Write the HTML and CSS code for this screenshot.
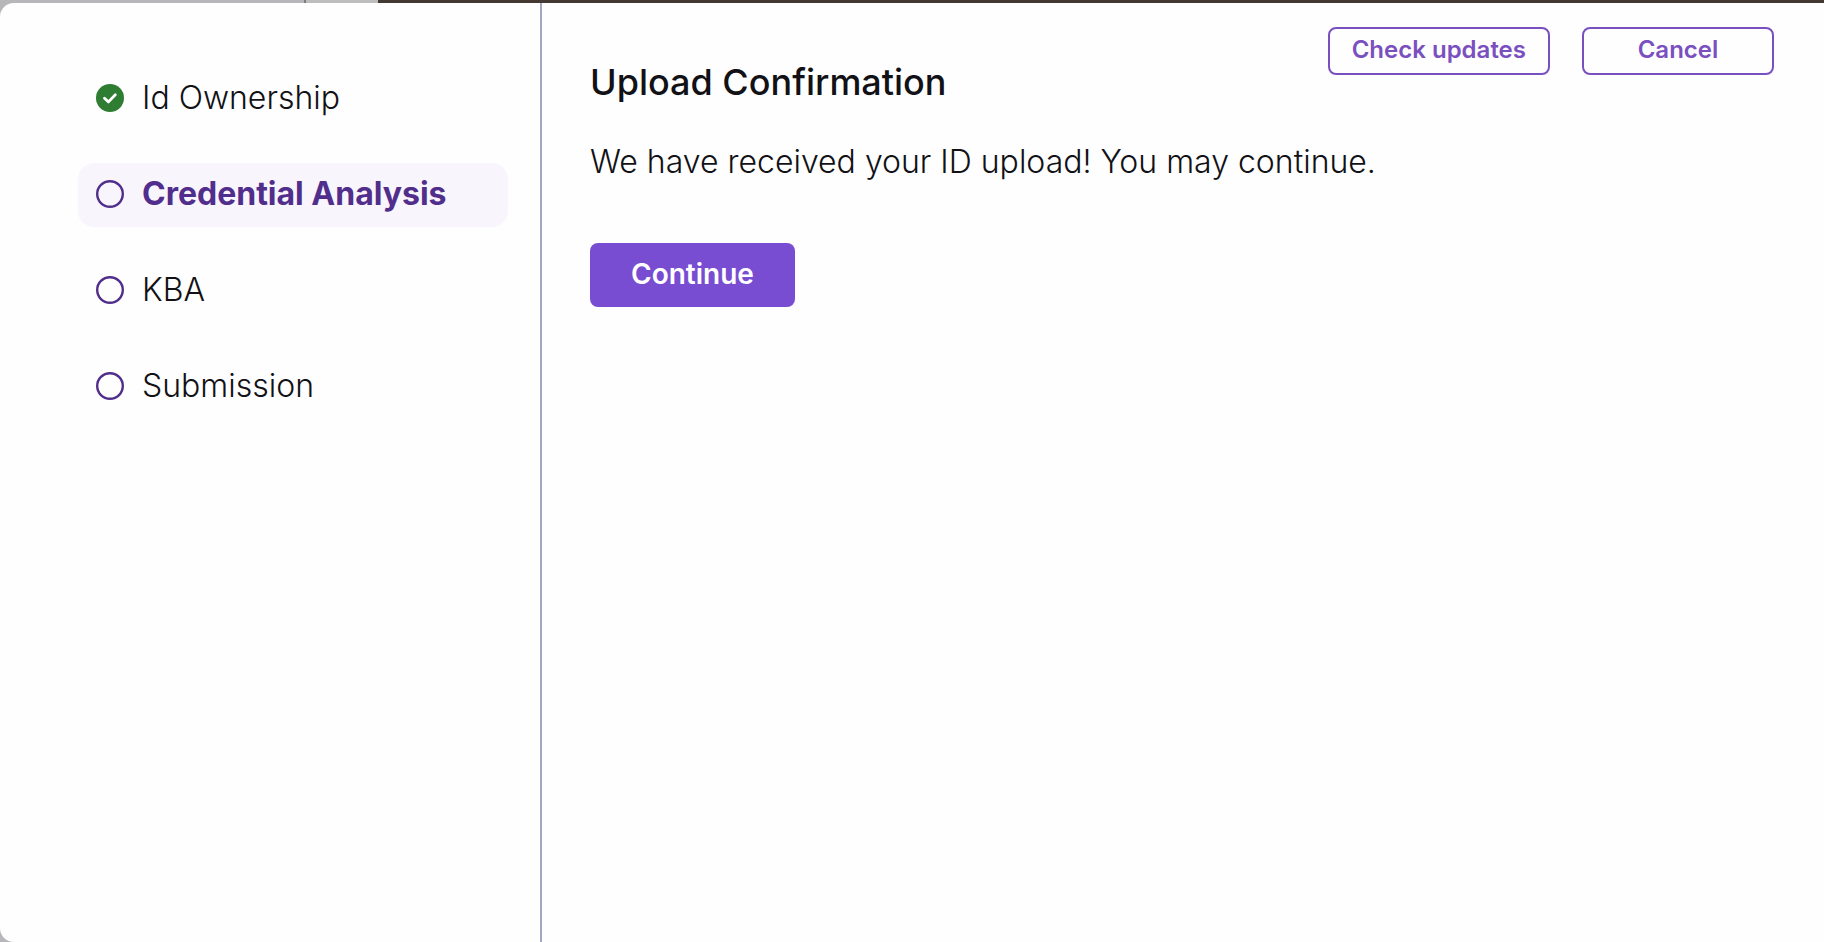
FILE: index.html
```html
<!DOCTYPE html>
<html lang="en">
<head>
<meta charset="utf-8">
<meta name="viewport" content="width=device-width, initial-scale=1">
<title>Upload Confirmation</title>
<link rel="stylesheet" href="styles.css">
</head>
<body>
<div class="backdrop" aria-hidden="true"><span class="backdrop-left"></span><span class="backdrop-mid"></span><span class="backdrop-dark"></span></div>
<div class="dialog">
  <nav class="sidebar" aria-label="Progress">
    <ol class="steps">
      <li class="step">
        <svg class="step-icon" viewBox="0 0 28 28" aria-hidden="true"><circle cx="14" cy="14" r="14" fill="#2e7d32"/><path d="M8.5 14.3l4 3.6 6.8-7.2" fill="none" stroke="#fff" stroke-width="2.8" stroke-linecap="round" stroke-linejoin="round"/></svg>
        <span>Id Ownership</span>
      </li>
      <li class="step step-active" aria-current="step">
        <svg class="step-icon" viewBox="0 0 28 28" aria-hidden="true"><circle cx="14" cy="14" r="12.8" fill="none" stroke="#512e8b" stroke-width="2.4"/></svg>
        <span>Credential Analysis</span>
      </li>
      <li class="step">
        <svg class="step-icon" viewBox="0 0 28 28" aria-hidden="true"><circle cx="14" cy="14" r="12.8" fill="none" stroke="#512e8b" stroke-width="2.4"/></svg>
        <span>KBA</span>
      </li>
      <li class="step">
        <svg class="step-icon" viewBox="0 0 28 28" aria-hidden="true"><circle cx="14" cy="14" r="12.8" fill="none" stroke="#512e8b" stroke-width="2.4"/></svg>
        <span>Submission</span>
      </li>
    </ol>
  </nav>
  <main class="content">
    <header class="header">
      <h1 class="title">Upload Confirmation</h1>
      <div class="actions">
        <button class="button button-outline" type="button">Check updates</button>
        <button class="button button-outline" type="button">Cancel</button>
      </div>
    </header>
    <p class="message">We have received your ID upload! You may continue.</p>
    <button class="button button-primary" type="button">Continue</button>
  </main>
</div>
</body>
</html>
```
FILE: styles.css
```css
* {
  box-sizing: border-box;
}

body {
  display: flex;
  flex-direction: column;
  min-height: 100vh;
  margin: 0;
  background: #b7b7b9;
  color: #111116;
  font-family: Inter, "Liberation Sans", sans-serif;
}

.backdrop {
  display: flex;
  height: 3px;
}

.backdrop-left {
  width: 306px;
  border-right: 2px solid #7d7c82;
}

.backdrop-mid {
  width: 72px;
  background: #bdbdbe;
}

.backdrop-dark {
  flex: 1;
  background: #443832;
}

.dialog {
  display: flex;
  flex: 1;
  background: #fefefe;
  border-radius: 14px 0 0 14px;
}

.sidebar {
  flex: none;
  padding: 64px 32px 64px 78px;
  border-right: 2px solid #a3a6bf;
}

.steps {
  display: flex;
  flex-direction: column;
  gap: 32px;
  width: 430px;
  margin: 0;
  padding: 0;
  list-style: none;
}

.step {
  display: flex;
  align-items: center;
  gap: 18px;
  height: 64px;
  padding: 0 18px 2px;
  border-radius: 16px;
  font-size: 32px;
  font-weight: 300;
  line-height: 40px;
}

.step-active {
  background: #f8f5fd;
  color: #512e8b;
  font-weight: 700;
}

.step-icon {
  flex: none;
  width: 28px;
  height: 28px;
}

.content {
  flex: 1;
  padding: 24px 50px 48px 48px;
}

.header {
  display: flex;
  justify-content: space-between;
  align-items: flex-start;
}

.title {
  margin: 31px 0 0;
  font-size: 36px;
  font-weight: 500;
  line-height: 48px;
}

.actions {
  display: flex;
  gap: 32px;
}

.message {
  margin: 36px 0 61px;
  font-size: 32px;
  font-weight: 300;
  line-height: 40px;
}

.button {
  border-radius: 8px;
  font-family: inherit;
  font-weight: 600;
  cursor: pointer;
}

.button-outline {
  min-width: 192px;
  height: 48px;
  padding: 0 22px 4px;
  border: 2px solid #7a50c0;
  background: transparent;
  color: #7a50c0;
  font-size: 24px;
}

.button-primary {
  height: 64px;
  padding: 0 41px 2px;
  border: 0;
  background: #794dd1;
  color: #fff;
  font-size: 28px;
}
```
